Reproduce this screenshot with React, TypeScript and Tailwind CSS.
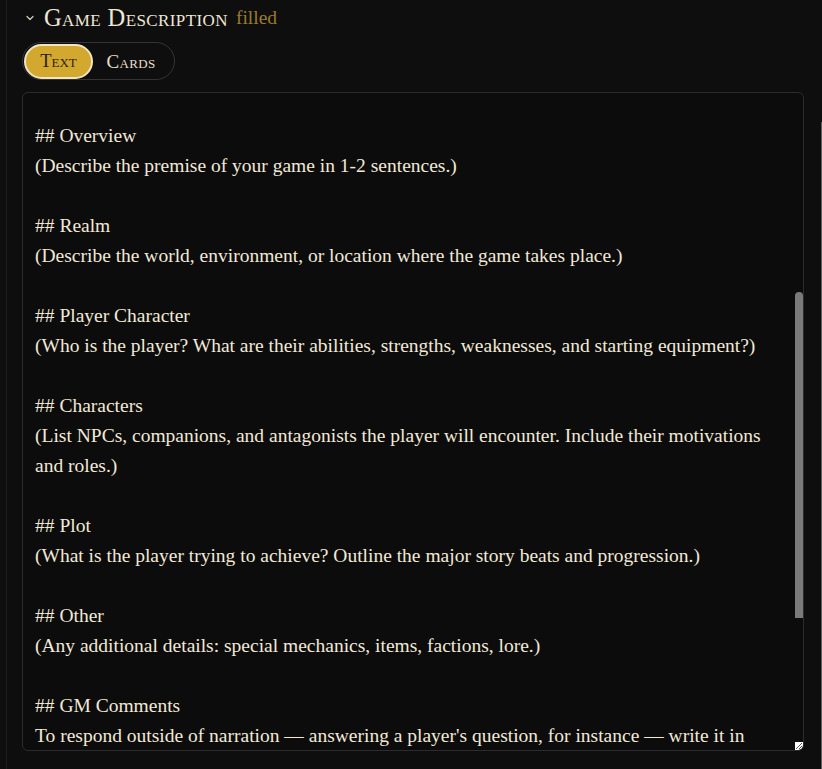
import { ChevronDown } from "lucide-react";

const lines: string[] = [
  "## Overview",
  "(Describe the premise of your game in 1-2 sentences.)",
  "",
  "## Realm",
  "(Describe the world, environment, or location where the game takes place.)",
  "",
  "## Player Character",
  "(Who is the player? What are their abilities, strengths, weaknesses, and starting equipment?)",
  "",
  "## Characters",
  "(List NPCs, companions, and antagonists the player will encounter. Include their motivations",
  "and roles.)",
  "",
  "## Plot",
  "(What is the player trying to achieve? Outline the major story beats and progression.)",
  "",
  "## Other",
  "(Any additional details: special mechanics, items, factions, lore.)",
  "",
  "## GM Comments",
  "To respond outside of narration \u2014 answering a player's question, for instance \u2014 write it in",
];

const App = () => {
  return (
    <div className="relative h-[769px] w-[822px] overflow-hidden bg-[#0e0e0e] font-['Liberation_Serif',serif] text-[#f1e9d8]">
      {/* outer panel edges */}
      <div className="absolute left-[6px] top-0 h-full w-px bg-[#1d1d1d]" />
      <div className="absolute right-0 top-[122px] bottom-0 w-px bg-[#5e5e5e]" />

      <div className="pl-[22px] pr-[18px] pt-[4px]">
        {/* header */}
        <div className="flex items-center h-[28px]">
          <ChevronDown size={12} strokeWidth={2.4} className="ml-[2px] mr-[8px] text-[#d6cfc0]" />
          <span className="text-[24.5px] leading-none tracking-[0.4px] [font-variant:small-caps] text-[#efe7d6]">
            Game Description
          </span>
          <span className="ml-[8px] text-[19.5px] leading-none text-[#9a7b2a]">filled</span>
        </div>

        {/* toggle */}
        <div className="mt-[10px] inline-flex h-[38px] items-center rounded-full border border-[#343434] p-px">
          <button className="h-[35px] w-[69px] rounded-full border-2 border-[#f1e4c2] bg-[#d2a82e] text-[18.5px] leading-none [font-variant:small-caps] text-[#2b230b]">
            Text
          </button>
          <button className="h-[35px] w-[80px] pr-[4px] text-[19px] leading-none tracking-[0.3px] [font-variant:small-caps] text-[#e8dfcb]">
            Cards
          </button>
        </div>

        {/* editor */}
        <div className="relative mt-[12px] h-[659px] overflow-hidden rounded-md border border-[#2c2c2c] bg-[#0c0c0c]">
          <div className="pl-[12px] pr-[20px] pt-[28px] text-[19.5px] leading-[30px]">
            {lines.map((l, i) => (
              <div key={i} className="h-[30px] whitespace-nowrap">
                {l}
              </div>
            ))}
          </div>
          {/* scrollbar thumb */}
          <div className="absolute right-0 top-[199px] h-[326px] w-[8px] rounded-t-full bg-[#7a7a7a]" />
          {/* resize grip */}
          <div className="absolute bottom-0 right-0 h-[8px] w-[8px] bg-white">
            <svg viewBox="0 0 8 8" className="h-full w-full">
              <path d="M1 7 L7 1 M4 7 L7 4" stroke="#555" strokeWidth="1" />
            </svg>
          </div>
        </div>
      </div>
    </div>
  );
};

export default App;
